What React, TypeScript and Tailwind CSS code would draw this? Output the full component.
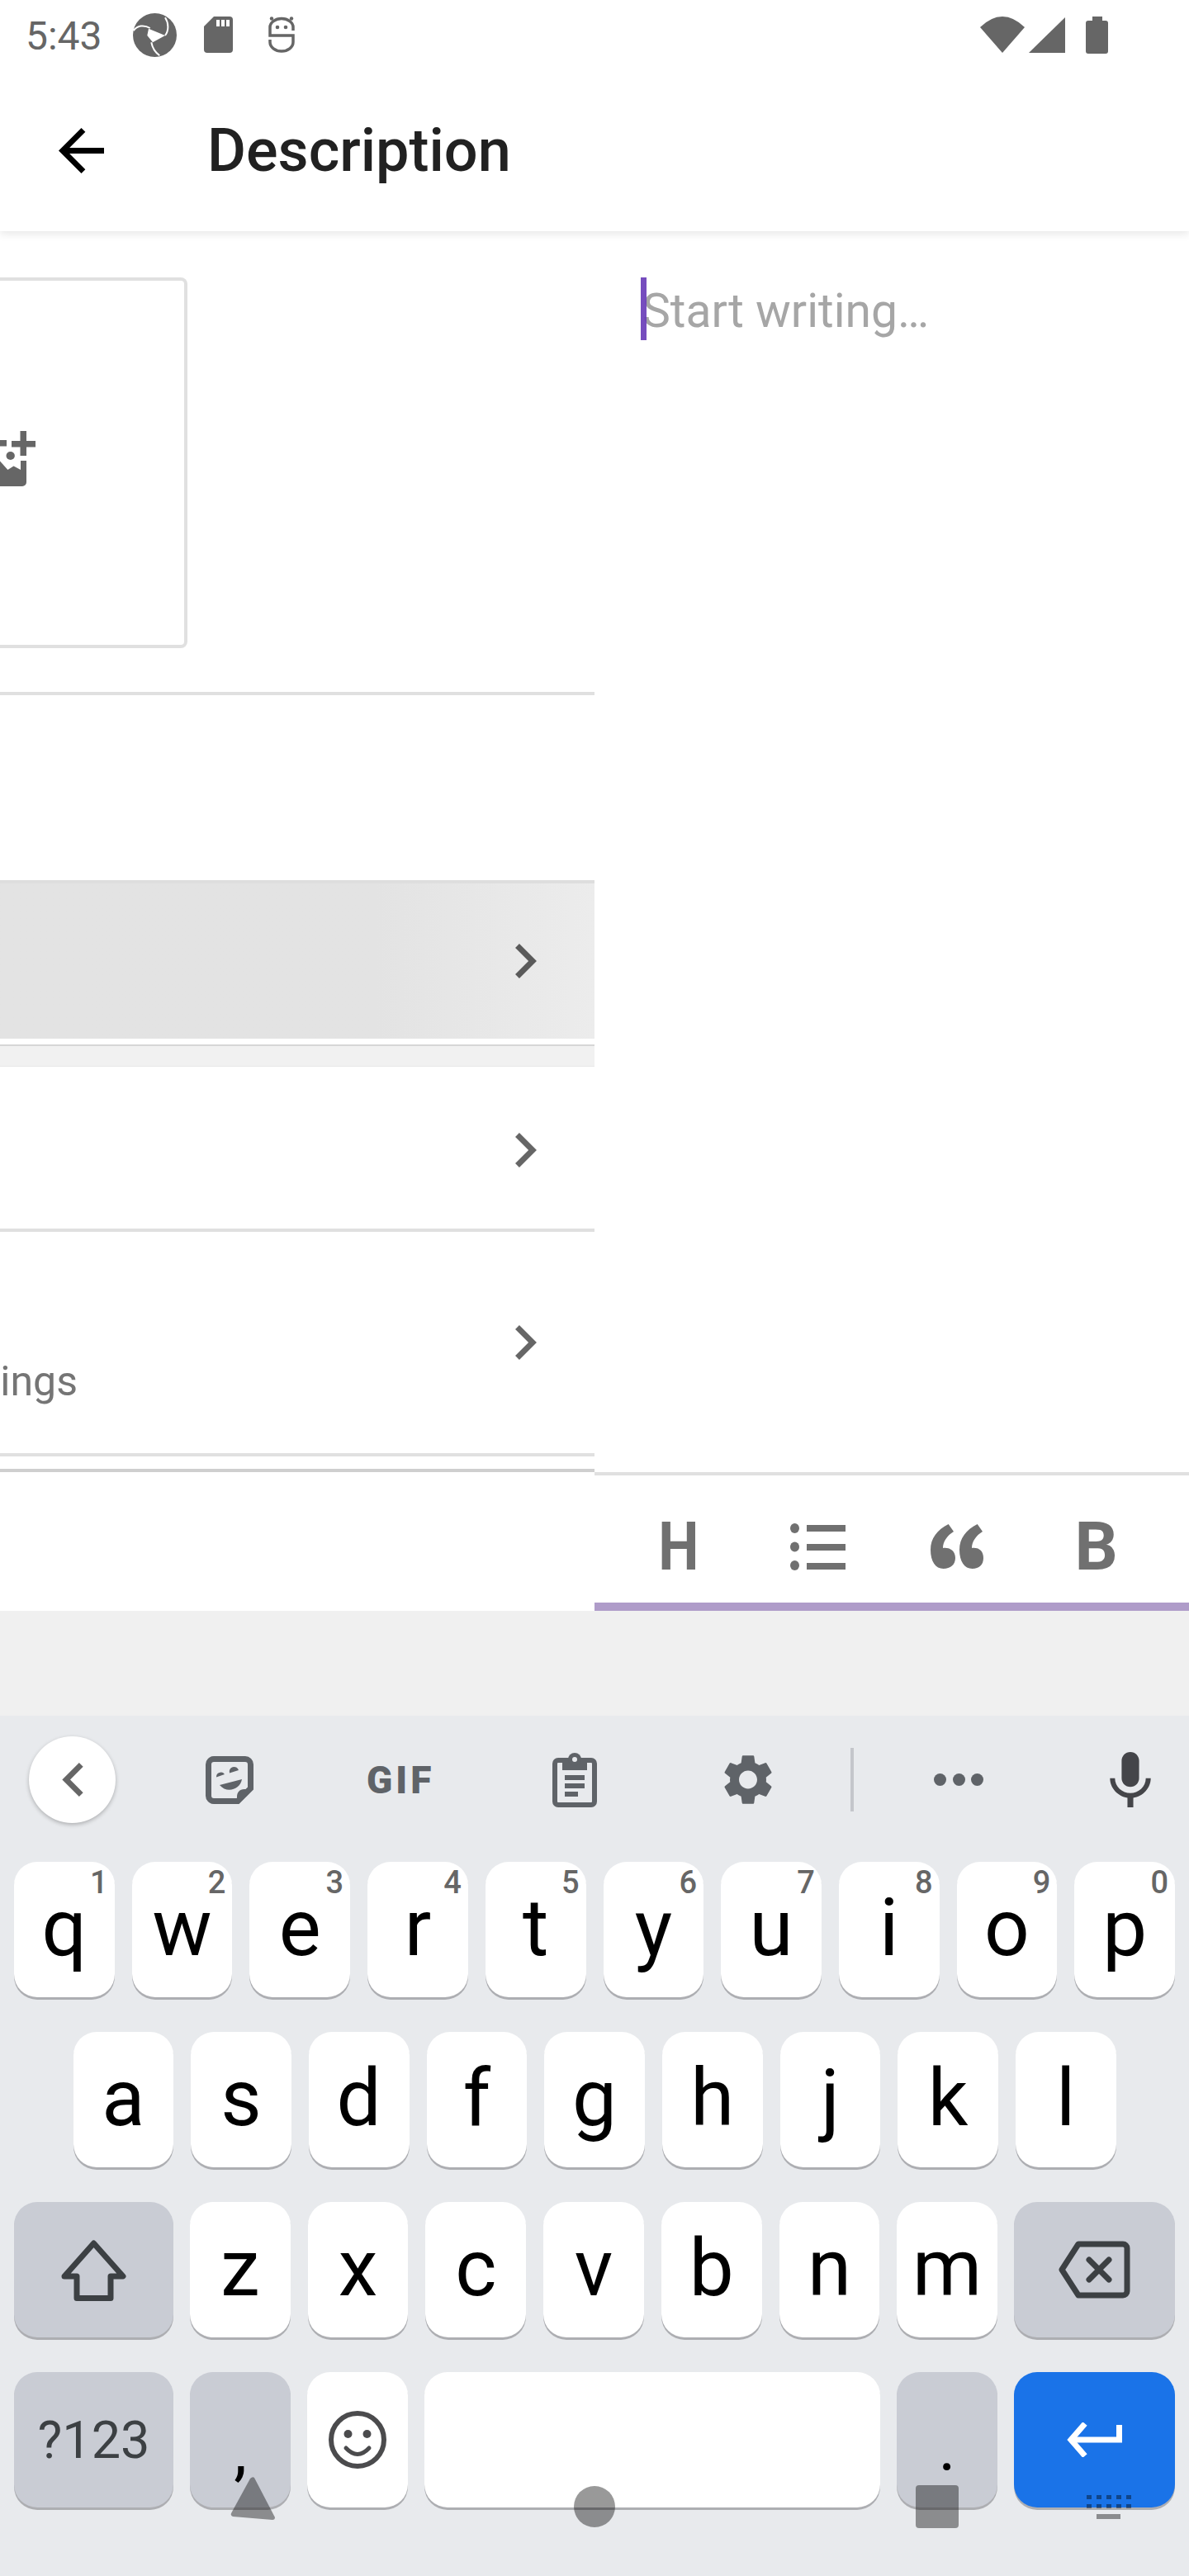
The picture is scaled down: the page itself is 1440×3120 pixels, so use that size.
const rowOne = ["q", "w", "e", "r", "t", "y", "u", "i", "o", "p"];
const hints = ["1", "2", "3", "4", "5", "6", "7", "8", "9", "0"];
const rowTwo = ["a", "s", "d", "f", "g", "h", "j", "k", "l"];
const rowThree = ["z", "x", "c", "v", "b", "n", "m"];

function ChevronRight() {
  return (
    <svg viewBox="8.59 6 7.41 12" className="w-[26px] h-[42px] shrink-0 fill-[#666666]">
      <path d="M10 6L8.59 7.41 13.17 12l-4.58 4.59L10 18l6-6z" />
    </svg>
  );
}

function Key({ label, hint }: { label: string; hint?: string }) {
  return (
    <div className="relative flex-1 h-[164px] rounded-[28px] bg-white shadow-[0_3px_0_#adaeb2] flex items-center justify-center pb-[4px] text-[96px] leading-none text-black">
      {label}
      {hint ? (
        <span className="absolute top-[2px] right-[8px] text-[38px] leading-[46px] font-medium text-[#666666]">{hint}</span>
      ) : null}
    </div>
  );
}

function StatusBar() {
  return (
    <div className="h-[84px] flex items-center pl-[31px] pr-[98px] text-[#666666]">
      <span className="text-[48px] leading-none font-normal mt-[4px] w-[90px] whitespace-nowrap">5:43</span>
      <svg viewBox="0 0 53 53" className="w-[53px] h-[53px] ml-[40px]">
        <circle cx="26.5" cy="26.5" r="26.5" fill="#666666" />
        <path d="M0.7 21.3C5 15 13 13.5 20.7 18M39 5.3C43.5 12 43.5 21 39 27M22.3 35.3C23.5 42 27 47.5 32.3 51.3" fill="none" stroke="#ffffff" strokeWidth="2" />
        <path d="M19 18.7L39 27L24 35.3L17.3 27z" fill="#ffffff" />
      </svg>
      <svg viewBox="0 0 35 44" className="w-[35px] h-[44px] ml-[33px]">
        <path d="M12 0H31a4 4 0 0 1 4 4V40a4 4 0 0 1-4 4H4a4 4 0 0 1-4-4V12z" fill="#666666" />
        <rect x="15" y="4" width="4" height="8" fill="#ffffff" />
        <rect x="21" y="4" width="4" height="8" fill="#ffffff" />
        <rect x="27" y="4" width="4" height="8" fill="#ffffff" />
      </svg>
      <svg viewBox="0 0 32 44" className="w-[32px] h-[44px] ml-[43px]" fill="none" stroke="#666666" strokeWidth="3.5">
        <path d="M30 17V13A14 10.5 0 0 0 2 13V23H30V31A14 11 0 0 1 2 31V28" />
        <circle cx="4" cy="2.5" r="2.2" fill="#666666" stroke="none" />
        <circle cx="28" cy="2.5" r="2.2" fill="#666666" stroke="none" />
        <circle cx="11" cy="13" r="2.3" fill="#666666" stroke="none" />
        <circle cx="21" cy="13" r="2.3" fill="#666666" stroke="none" />
      </svg>
      <svg viewBox="0 0 54 44" className="w-[54px] h-[44px] ml-auto fill-[#666666]">
        <path d="M27 44L0 13Q27 -13 54 13Z" />
      </svg>
      <svg viewBox="0 0 44 43" className="w-[44px] h-[43px] ml-[5px] fill-[#666666]">
        <path d="M44 0V43H0z" />
      </svg>
      <div className="ml-[25px] w-[27px] h-[45px] flex flex-col items-center">
        <div className="w-[12px] h-[5px] bg-[#666666]" />
        <div className="w-[27px] h-[40px] rounded-[3px] bg-[#666666]" />
      </div>
    </div>
  );
}

function LeftPanel() {
  return (
    <div className="w-[720px] flex flex-col bg-white">
      <div className="h-[562px] border-b-[4px] border-[#e0e0e0] pt-[56px]">
        <div className="w-[227px] h-[449px] border-y-[4px] border-r-[4px] border-[#e0e0e0] rounded-r-[8px] flex items-center">
          <svg viewBox="0 0 43 68" className="w-[43px] h-[68px] mb-[12px]">
            <path d="M14 13H24.500V1H32V13H43V20.500H32V31H24.500V20.500H14z" fill="#666666" />
            <rect x="0" y="12" width="8" height="7.500" fill="#666666" />
            <ellipse cx="12.700" cy="31" rx="5.200" ry="5" fill="#666666" />
            <path d="M0 37.500L9.400 48L16.500 43.600L25 48V37H32V63a5 5 0 0 1-5 5H0z" fill="#666666" />
          </svg>
        </div>
      </div>
      <div className="h-[224px]" />
      <div className="h-[192px] border-t-[4px] border-[#dedede] bg-linear-to-r from-[#e3e3e3] from-[63%] to-[#ececec] flex items-center justify-end pr-[70px]">
        <svg viewBox="8.59 6 7.41 12" className="w-[26px] h-[42px] fill-[#5a5a5a]">
          <path d="M10 6L8.59 7.41 13.17 12l-4.58 4.59L10 18l6-6z" />
        </svg>
      </div>
      <div className="h-[7px]" />
      <div className="h-[27px] bg-[#f1f1f1] border-t-2 border-b border-t-[#d6d6d6] border-b-[#e8e8e8]" />
      <div className="h-[196px] pt-[5px] border-0 flex items-center justify-end pr-[70px]">
        <ChevronRight />
      </div>
      <div className="h-[4px] bg-[#e0e0e0]" />
      <div className="h-[268px] flex pr-[70px]">
        <div className="w-[94px] h-[210px] flex items-end justify-end overflow-hidden whitespace-nowrap text-[50px] leading-[58px] text-[#757575]">
          settings
        </div>
        <div className="flex-1 flex items-center justify-end">
          <ChevronRight />
        </div>
      </div>
      <div className="h-[4px] bg-[#e0e0e0]" />
      <div className="h-[15px]" />
      <div className="h-[4px] bg-[#cfcfcf]" />
      <div className="flex-1" />
    </div>
  );
}

function EditorPanel() {
  return (
    <div className="w-[720px] flex flex-col bg-white">
      <div className="flex-1 pt-[56px] pl-[56px]">
        <div className="flex h-[76px] items-start">
          <div className="relative z-10 w-[7px] h-[76px] bg-[#673ab7]/90" />
          <span className="-ml-[5px] mt-[3px] text-[57px] leading-[76px] text-[#a6a6a6]">Start writing…</span>
        </div>
      </div>
      <div className="h-[168px] border-t-[4px] border-b-[10px] border-t-[#e0e0e0] border-b-[#af9cc9] pl-[18px] pt-[18px] flex items-center text-[#707070]">
        <div className="w-[168.500px] flex justify-center">
          <span className="text-[82px] leading-none font-bold scale-x-[0.85]">H</span>
        </div>
        <div className="w-[168.500px] flex justify-center">
          <svg viewBox="0 0 67 57" className="w-[67px] h-[57px] fill-[#707070]">
            <ellipse cx="5.500" cy="6" rx="5.500" ry="6" />
            <ellipse cx="5.500" cy="28.500" rx="5.500" ry="6" />
            <ellipse cx="5.500" cy="51" rx="5.500" ry="6" />
            <rect x="20" y="2" width="47" height="8" />
            <rect x="20" y="25" width="47" height="8" />
            <rect x="20" y="48" width="47" height="8" />
          </svg>
        </div>
        <div className="w-[168.500px] flex justify-center">
          <svg viewBox="0 0 64 54" className="w-[64px] h-[54px] fill-[#707070]">
            <path d="M21.700 0L28 9C20 14 15 21 15 29C24 28 30 33 30 41C30 49 24 54 15.600 54C6 54 0 45 0 31C0 17 8 7 21.700 0Z" />
            <path d="M56.700 0L63 9C55 14 50 21 50 29C59 28 64 33 64 41C64 49 59 54 50.600 54C41 54 35 45 35 31C35 17 43 7 56.700 0Z" />
          </svg>
        </div>
        <div className="w-[168.500px] flex justify-center">
          <span className="text-[82px] leading-none font-bold">B</span>
        </div>
      </div>
    </div>
  );
}

function SuggestionStrip() {
  return (
    <div className="h-[177px] pt-[25px] pl-[35px] flex items-start">
      <div className="h-[105px] flex items-center">
        <div className="w-[105px] h-[105px] rounded-full bg-white shadow-[0_2px_5px_rgba(0,0,0,0.25)] flex items-center justify-center">
          <svg viewBox="8 6 7.41 12" className="w-[26px] h-[41px] fill-[#666666]">
            <path d="M15.41 7.41L14 6l-6 6 6 6 1.41-1.41L10.83 12z" />
          </svg>
        </div>
        <svg viewBox="0 0 58 58" className="w-[58px] h-[58px] ml-[109px] fill-[#5f6368]">
          <path d="M10 3.500H48A6.500 6.500 0 0 1 54.500 10V39L39 54.500H10A6.500 6.500 0 0 1 3.500 48V10A6.500 6.500 0 0 1 10 3.500Z" fill="none" stroke="#5f6368" strokeWidth="7" />
          <path d="M57 40H47C41 40 38 44 38 49V57Z" />
          <path d="M13 25.500A5.500 5.500 0 0 1 23 22Z" />
          <path d="M29 20.500A5.500 5.500 0 0 1 40 17Z" />
          <path d="M17 35L44 28C42 40 26 46 17 35Z" />
        </svg>
        <span className="ml-[137px] w-[82px] whitespace-nowrap text-[46px] leading-none font-black tracking-[4px] text-[#5f6368]">GIF</span>
        <svg viewBox="0 0 54 66" className="w-[54px] h-[66px] ml-[143px] fill-[#5f6368]">
          <rect x="3" y="9" width="48" height="54" rx="4" fill="none" stroke="#5f6368" strokeWidth="6" />
          <rect x="12" y="6" width="30" height="15" />
          <circle cx="27" cy="8" r="8" />
          <circle cx="27" cy="8" r="3" fill="#e8eaed" />
          <rect x="15" y="27" width="24" height="6" />
          <rect x="15" y="37" width="24" height="6" />
          <rect x="15" y="47" width="16" height="6" />
        </svg>
        <svg viewBox="2.500 2 19 20" className="w-[58px] h-[61px] ml-[154px] fill-[#5f6368]">
          <path d="M19.14 12.94c.04-.3.06-.61.06-.94 0-.32-.02-.64-.07-.94l2.03-1.58c.18-.14.23-.41.12-.61l-1.92-3.32c-.12-.22-.37-.29-.59-.22l-2.39.96c-.5-.38-1.03-.7-1.62-.94l-.36-2.54c-.04-.24-.24-.41-.48-.41h-3.84c-.24 0-.43.17-.47.41l-.36 2.54c-.59.24-1.13.57-1.62.94l-2.39-.96c-.22-.08-.47 0-.59.22L2.74 8.87c-.12.21-.08.47.12.61l2.03 1.58c-.05.3-.09.63-.09.94s.02.64.07.94l-2.03 1.58c-.18.14-.23.41-.12.61l1.92 3.32c.12.22.37.29.59.22l2.39-.96c.5.38 1.03.7 1.62.94l.36 2.54c.05.24.24.41.48.41h3.84c.24 0 .44-.17.47-.41l.36-2.54c.59-.24 1.13-.56 1.62-.94l2.39.96c.22.08.47 0 .59-.22l1.92-3.32c.12-.22.07-.47-.12-.61l-2.01-1.58zM12 15.6c-1.98 0-3.6-1.62-3.6-3.6s1.62-3.6 3.6-3.6 3.6 1.62 3.6 3.6-1.62 3.6-3.6 3.6z" />
        </svg>
        <div className="w-[4px] h-[77px] ml-[95px] bg-[#c4c6cb]" />
        <div className="ml-[97px] w-[60px] flex justify-between">
          <div className="w-[15px] h-[15px] rounded-full bg-[#5f6368]" />
          <div className="w-[15px] h-[15px] rounded-full bg-[#5f6368]" />
          <div className="w-[15px] h-[15px] rounded-full bg-[#5f6368]" />
        </div>
        <svg viewBox="5 2 14 19" className="w-[50px] h-[67px] ml-[153px] fill-[#444549]">
          <path d="M12 14c1.66 0 2.99-1.34 2.99-3L15 5c0-1.66-1.34-3-3-3S9 3.34 9 5v6c0 1.66 1.34 3 3 3zm5.3-3c0 3-2.54 5.1-5.3 5.1S6.7 14 6.7 11H5c0 3.41 2.72 6.23 6 6.72V21h2v-3.28c3.28-.48 6-3.3 6-6.72h-1.7z" />
        </svg>
      </div>
    </div>
  );
}

function Keyboard() {
  return (
    <div className="h-[1042px] bg-[#e8eaed] text-black">
      <SuggestionStrip />
      <div className="flex flex-col gap-[42px]">
        <div className="flex gap-[21px] px-[17px]">
          {rowOne.map((k, i) => (
            <Key key={k} label={k} hint={hints[i]} />
          ))}
        </div>
        <div className="flex gap-[21px] px-[88.500px]">
          {rowTwo.map((k) => (
            <Key key={k} label={k} />
          ))}
        </div>
        <div className="flex gap-[20px] pl-[17px] pr-[17px]">
          <div className="w-[193px] h-[164px] rounded-[28px] bg-[#c9ccd4] shadow-[0_3px_0_#adaeb2] flex items-center justify-center">
            <svg viewBox="0 0 79 75" className="w-[79px] h-[75px]" fill="none" stroke="#3c4043" strokeWidth="7" strokeLinejoin="round">
              <path d="M39.500 5L75 45H60V71.500H19V45H4Z" />
            </svg>
          </div>
          <div className="flex-1 flex gap-[21px]">
            {rowThree.map((k) => (
              <Key key={k} label={k} />
            ))}
          </div>
          <div className="w-[195px] h-[164px] rounded-[28px] bg-[#c9ccd4] shadow-[0_3px_0_#adaeb2] flex items-center justify-center">
            <svg viewBox="0 0 87 70" className="w-[87px] h-[70px]" fill="none" stroke="#3c4043" strokeWidth="7" strokeLinecap="round" strokeLinejoin="round">
              <path d="M4 35L24 4H78A5 5 0 0 1 83 9V61A5 5 0 0 1 78 66H24Z" />
              <path d="M37 23L61 47M61 23L37 47" />
            </svg>
          </div>
        </div>
        <div className="flex gap-[20px] px-[17px]">
          <div className="w-[193px] h-[164px] rounded-[28px] bg-[#c9ccd4] shadow-[0_3px_0_#adaeb2] flex items-center justify-center text-[63px] leading-none text-[#3c4043]">
            ?123
          </div>
          <div className="w-[122px] h-[164px] rounded-[28px] bg-[#c9ccd4] shadow-[0_3px_0_#adaeb2] flex items-end justify-center pb-[28px] text-[80px] leading-none">
            ,
          </div>
          <div className="w-[122px] h-[164px] rounded-[28px] bg-white shadow-[0_3px_0_#adaeb2] flex items-center justify-center">
            <svg viewBox="0 0 70 70" className="w-[70px] h-[70px]" fill="none" stroke="#4b4b4d">
              <circle cx="35" cy="35" r="32" strokeWidth="6" />
              <circle cx="23.500" cy="28" r="5" fill="#4b4b4d" stroke="none" />
              <circle cx="46.500" cy="28" r="5" fill="#4b4b4d" stroke="none" />
              <path d="M21 45Q35 60 49 45" strokeWidth="5" strokeLinecap="round" />
            </svg>
          </div>
          <div className="flex-1 h-[164px] rounded-[28px] bg-white shadow-[0_3px_0_#adaeb2]" />
          <div className="w-[122px] h-[164px] rounded-[28px] bg-[#c9ccd4] shadow-[0_3px_0_#adaeb2] flex items-end justify-center pb-[32px] text-[80px] leading-none">
            .
          </div>
          <div className="w-[195px] h-[164px] rounded-[28px] bg-[#1a73e8] shadow-[0_3px_0_#adaeb2] flex items-center justify-center">
            <svg viewBox="0 0 67 42" className="w-[67px] h-[42px]" fill="none" stroke="#ffffff" strokeWidth="7">
              <path d="M63.500 3V21H6" />
              <path d="M22 1.500L5 21L22 40.500" />
            </svg>
          </div>
        </div>
      </div>
    </div>
  );
}

export default function App() {
  return (
    <div className="relative w-[1440px] h-[3120px] overflow-hidden bg-[#f0f0f0] font-[Roboto,sans-serif] flex flex-col">
      <header className="relative z-10 h-[280px] bg-white shadow-[0_3px_10px_rgba(0,0,0,0.1)]">
        <StatusBar />
        <div className="h-[196px] flex items-center pl-[71px]">
          <svg viewBox="4 4 16 16" className="w-[55px] h-[55px] fill-black">
            <path d="M20 11H7.83l5.59-5.59L12 4l-8 8 8 8 1.41-1.41L7.83 13H20v-2z" />
          </svg>
          <h1 className="ml-[125px] mt-[2px] text-[72px] leading-none font-medium text-[#212121]">Description</h1>
        </div>
      </header>
      <div className="h-[1671px] flex">
        <LeftPanel />
        <EditorPanel />
      </div>
      <div className="h-[127px]" />
      <Keyboard />

      {/* system nav buttons drawn over the keyboard */}
      <svg viewBox="0 0 56 52" className="absolute left-[278px] top-[3000px] w-[56px] h-[52px] fill-black/40">
        <path d="M30 1L55 49Q55 52 52 52L4 48Q1 47 2 44L25 2Q28 -1 30 1Z" />
      </svg>
      <div className="absolute left-[695px] top-[3011px] w-[50px] h-[50px] rounded-full bg-black/40" />
      <div className="absolute left-[1109px] top-[3010px] w-[52px] h-[52px] rounded-[4px] bg-black/40" />
      <div className="absolute left-[1316px] top-[3022px] w-[54px] grid grid-cols-5 gap-x-[6px] gap-y-[6px]">
        {Array.from({ length: 10 }).map((_, i) => (
          <div key={i} className="h-[5px] bg-black/40" />
        ))}
      </div>
      <div className="absolute left-[1328px] top-[3045px] w-[29px] h-[6px] bg-black/40" />
    </div>
  );
}
